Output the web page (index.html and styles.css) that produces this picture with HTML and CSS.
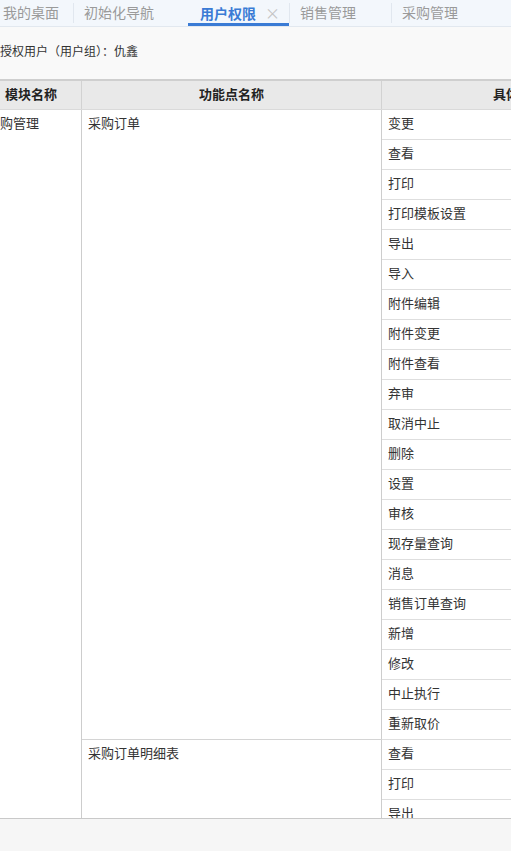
FILE: index.html
```html
<!DOCTYPE html>
<html lang="zh-CN">
<head>
<meta charset="utf-8">
<title>用户权限</title>
<link rel="stylesheet" href="styles.css">
</head>
<body>
<div class="page">
  <div class="tabs">
    <div class="tab tab-desk">我的桌面</div>
    <div class="tab tab-nav sep">初始化导航</div>
    <div class="tab tab-active">用户权限<span class="close">×</span></div>
    <div class="tab tab-sale sep">销售管理</div>
    <div class="tab tab-buy sep">采购管理</div>
  </div>
  <div class="info">授权用户（用户组）：仇鑫</div>
  <div class="grid">
    <table class="perm">
      <colgroup>
        <col class="c1"><col class="c2"><col class="c3">
      </colgroup>
      <thead>
        <tr><th>模块名称</th><th>功能点名称</th><th>具体功能</th></tr>
      </thead>
      <tbody>
        <tr><td class="mod" rowspan="27">采购管理</td><td class="fn" rowspan="21">采购订单</td><td>变更</td></tr>
        <tr><td>查看</td></tr>
        <tr><td>打印</td></tr>
        <tr><td>打印模板设置</td></tr>
        <tr><td>导出</td></tr>
        <tr><td>导入</td></tr>
        <tr><td>附件编辑</td></tr>
        <tr><td>附件变更</td></tr>
        <tr><td>附件查看</td></tr>
        <tr><td>弃审</td></tr>
        <tr><td>取消中止</td></tr>
        <tr><td>删除</td></tr>
        <tr><td>设置</td></tr>
        <tr><td>审核</td></tr>
        <tr><td>现存量查询</td></tr>
        <tr><td>消息</td></tr>
        <tr><td>销售订单查询</td></tr>
        <tr><td>新增</td></tr>
        <tr><td>修改</td></tr>
        <tr><td>中止执行</td></tr>
        <tr><td>重新取价</td></tr>
        <tr><td class="fn" rowspan="6">采购订单明细表</td><td>查看</td></tr>
        <tr><td>打印</td></tr>
        <tr><td>导出</td></tr>
        <tr><td>打印模板设置</td></tr>
        <tr><td>附件查看</td></tr>
        <tr><td>设置</td></tr>
      </tbody>
    </table>
  </div>
  <div class="footer"></div>
</div>
</body>
</html>
```

FILE: styles.css
```css
html, body {
  margin: 0;
  padding: 0;
  overflow: hidden;
}
body {
  background: #f9f9f9;
  font-family: "Noto Sans CJK SC", "Noto Sans", sans-serif;
  color: #333;
}
.page {
  width: 511px;
  height: 851px;
  display: flex;
  flex-direction: column;
  overflow: hidden;
}
.tabs {
  display: flex;
  align-items: flex-start;
  height: 26px;
  background: #f3f7fc;
  border-bottom: 1px solid #e2e8ef;
  margin-left: -7px;
  flex: none;
  white-space: nowrap;
}
.tab {
  box-sizing: border-box;
  height: 20px;
  margin-top: 3px;
  line-height: 19px;
  padding-left: 10px;
  font-size: 14px;
  color: #9a9a9a;
  flex: none;
}
.tab.sep {
  border-left: 1px solid #e1e7ef;
}
.tab-desk { width: 80px; }
.tab-nav { width: 115px; }
.tab-active {
  width: 101px;
  height: 26px;
  margin-top: 0;
  padding-top: 3px;
  padding-left: 12px;
  border-bottom: 3px solid #3a7bd5;
  color: #3a7bd5;
  font-weight: bold;
}
.close {
  font-weight: normal;
  color: #c4c4c4;
  font-size: 15px;
  margin-left: 9px;
}
.tab-sale { width: 102px; }
.tab-buy { width: 120px; }

.info {
  flex: none;
  font-size: 12px;
  line-height: 20px;
  padding: 14px 0 18px 0;
  color: #333;
  white-space: nowrap;
}
.grid {
  flex: none;
  height: 737px;
  overflow: hidden;
  border-top: 2px solid #cfcfcf;
  border-bottom: 1px solid #c9c9c9;
  background: #fff;
}
.perm {
  margin-left: -20px;
  border-collapse: collapse;
  table-layout: fixed;
  width: 676px;
  font-size: 13px;
}
.c1 { width: 101px; }
.c2 { width: 300px; }
.c3 { width: 275px; }
.perm th {
  background: #e9e9e9;
  height: 26px;
  line-height: 26px;
  padding: 0 0 2px 0;
  font-weight: bold;
  color: #222;
  text-align: center;
  border-left: 1px solid #d2d2d2;
  border-right: 1px solid #d2d2d2;
  border-bottom: 1px solid #dadada;
}
.perm td {
  height: 26px;
  line-height: 26px;
  padding: 0 6px 3px 6px;
  border-bottom: 1px solid #dedede;
  border-left: 1px solid #cdcdcd;
  border-right: 1px solid #cdcdcd;
  vertical-align: top;
  white-space: nowrap;
  color: #333;
}
.perm td.mod,
.perm td.fn {
  border-bottom-color: #d4d4d4;
}
.footer {
  flex: 1;
  background: #f6f6f6;
}
```
